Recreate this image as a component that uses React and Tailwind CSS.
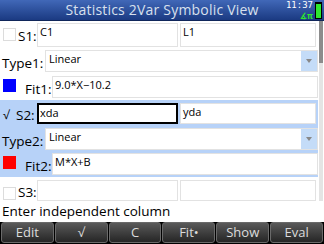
import React from "react";

function Field({ text, className = "" }) {
  return (
    <div className={"h-full bg-white border border-[#e2e2e2] pl-[2px] text-[11px] leading-[16px] text-black " + className}>
      {text}
    </div>
  );
}

function Choice({ text }) {
  return (
    <div className="h-full flex-1 flex bg-white border border-[#e2e2e2] text-[11px] leading-[16px] text-black">
      <div className="flex-1 pl-[3px]">{text}</div>
      <div className="w-[16px] h-full bg-[#c4dcf8] flex items-center justify-center">
        <div className="w-0 h-0 border-l-[3px] border-r-[3px] border-t-[4px] border-l-transparent border-r-transparent border-t-[#888]" />
      </div>
    </div>
  );
}

function Box({ color, border = "" }) {
  return <div className={"w-[13px] h-[13px] shrink-0 " + color + " " + border} />;
}

export default function App() {
  const keys = ["Edit", "√", "C", "Fit•", "Show", "Eval"];
  return (
    <div className="w-[324px] h-[244px] overflow-hidden bg-white flex flex-col font-['Open_Sans',sans-serif]">
      <div className="h-[21px] shrink-0 relative bg-gradient-to-b from-[#4168b8] to-[#1b3a82] border-b border-[#10265a] flex items-center justify-center">
        <span className="text-[14px] leading-none text-[#d8e0ee] tracking-[0.2px]">Statistics 2Var Symbolic View</span>
        <div className="absolute right-[11px] top-[1px] text-[9px] leading-[9px] text-white font-['DejaVu_Sans_Mono',monospace]">11:37</div>
        <div className="absolute right-[11px] top-[11px] text-[8px] leading-[9px] text-[#2ee82e] font-bold">∡π</div>
        <div className="absolute right-[2px] top-[2px] w-[7px] h-[17px] bg-black p-[1px] flex flex-col">
          <div className="h-[1px] w-[3px] mx-auto bg-black" />
          <div className="flex-1 bg-[#2ee82e]" />
        </div>
      </div>

      <div className="flex flex-1 min-h-0">
        <div className="w-[318px] flex flex-col text-[13.5px] text-black">
          <div className="flex items-end h-[24px] mt-[2px]">
            <Box color="bg-white" border="border border-[#dcdcdc] ml-[3px] mb-[6px]" />
            <span className="w-[21px] pl-[2px] leading-[18px] mb-[2px]">S1:</span>
            <Field text="C1" className="w-[141px]" />
            <Field text="L1" className="w-[136px] ml-[2px]" />
          </div>
          <div className="flex items-end h-[22px] mt-[3px]">
            <span className="w-[45px] pl-[2px] leading-[18px]">Type1:</span>
            <Choice text="Linear" />
          </div>
          <div className="flex items-end h-[22px] mt-[4px]">
            <Box color="bg-[#0000ff]" border="ml-[3px] mb-[6px]" />
            <span className="w-[36px] pl-[9px] leading-[18px]">Fit1:</span>
            <Field text="9.0*X−10.2" className="flex-1" />
          </div>

          <div className="bg-[#b7d2f8] mt-[2px] pt-[3px] pb-[2px]">
            <div className="flex items-end h-[21px]">
              <span className="w-[16px] pl-[3px] leading-[18px] text-[12px]">√</span>
              <span className="w-[21px] leading-[18px]">S2:</span>
              <div className="w-[141px] h-full bg-white border-2 border-black pl-[1px] text-[11px] leading-[15px]">xda</div>
              <Field text="yda" className="w-[136px] ml-[2px] border-[#9cbcec]" />
            </div>
            <div className="flex items-end h-[22px] mt-[4px]">
              <span className="w-[45px] pl-[2px] leading-[18px]">Type2:</span>
              <Choice text="Linear" />
            </div>
            <div className="flex items-end h-[22px] mt-[3px]">
              <Box color="bg-[#ff0000]" border="ml-[3px] mb-[6px]" />
              <span className="w-[36px] pl-[9px] leading-[18px]">Fit2:</span>
              <Field text="M*X+B" className="flex-1" />
            </div>
          </div>

          <div className="flex items-end h-[21px] mt-[3px]">
            <Box color="bg-white" border="border border-[#dcdcdc] ml-[3px] mb-[1px]" />
            <span className="w-[21px] pl-[2px] leading-[18px]">S3:</span>
            <Field text="" className="w-[141px]" />
            <Field text="" className="w-[136px] ml-[2px]" />
          </div>
        </div>
        <div className="w-[6px] flex justify-center bg-white">
          <div className="w-[4px] h-full bg-[#e4e4e4]">
            <div className="h-[42px] bg-[#8c8c8c]" />
          </div>
        </div>
      </div>

      <div className="h-[21px] shrink-0 bg-white text-[13.5px] leading-[21px] pl-[2px] text-black">
        Enter independent column
      </div>
      <div className="h-[22px] shrink-0 bg-black flex gap-[1px] px-[1px] pb-[1px]">
        {keys.map((k) => (
          <div
            key={k}
            className="flex-1 rounded-[3px] border border-[#6a6a6a] bg-gradient-to-b from-[#5a5a5a] to-[#262626] text-[#dcdcdc] text-[13px] leading-[19px] text-center"
          >
            {k}
          </div>
        ))}
      </div>
    </div>
  );
}
